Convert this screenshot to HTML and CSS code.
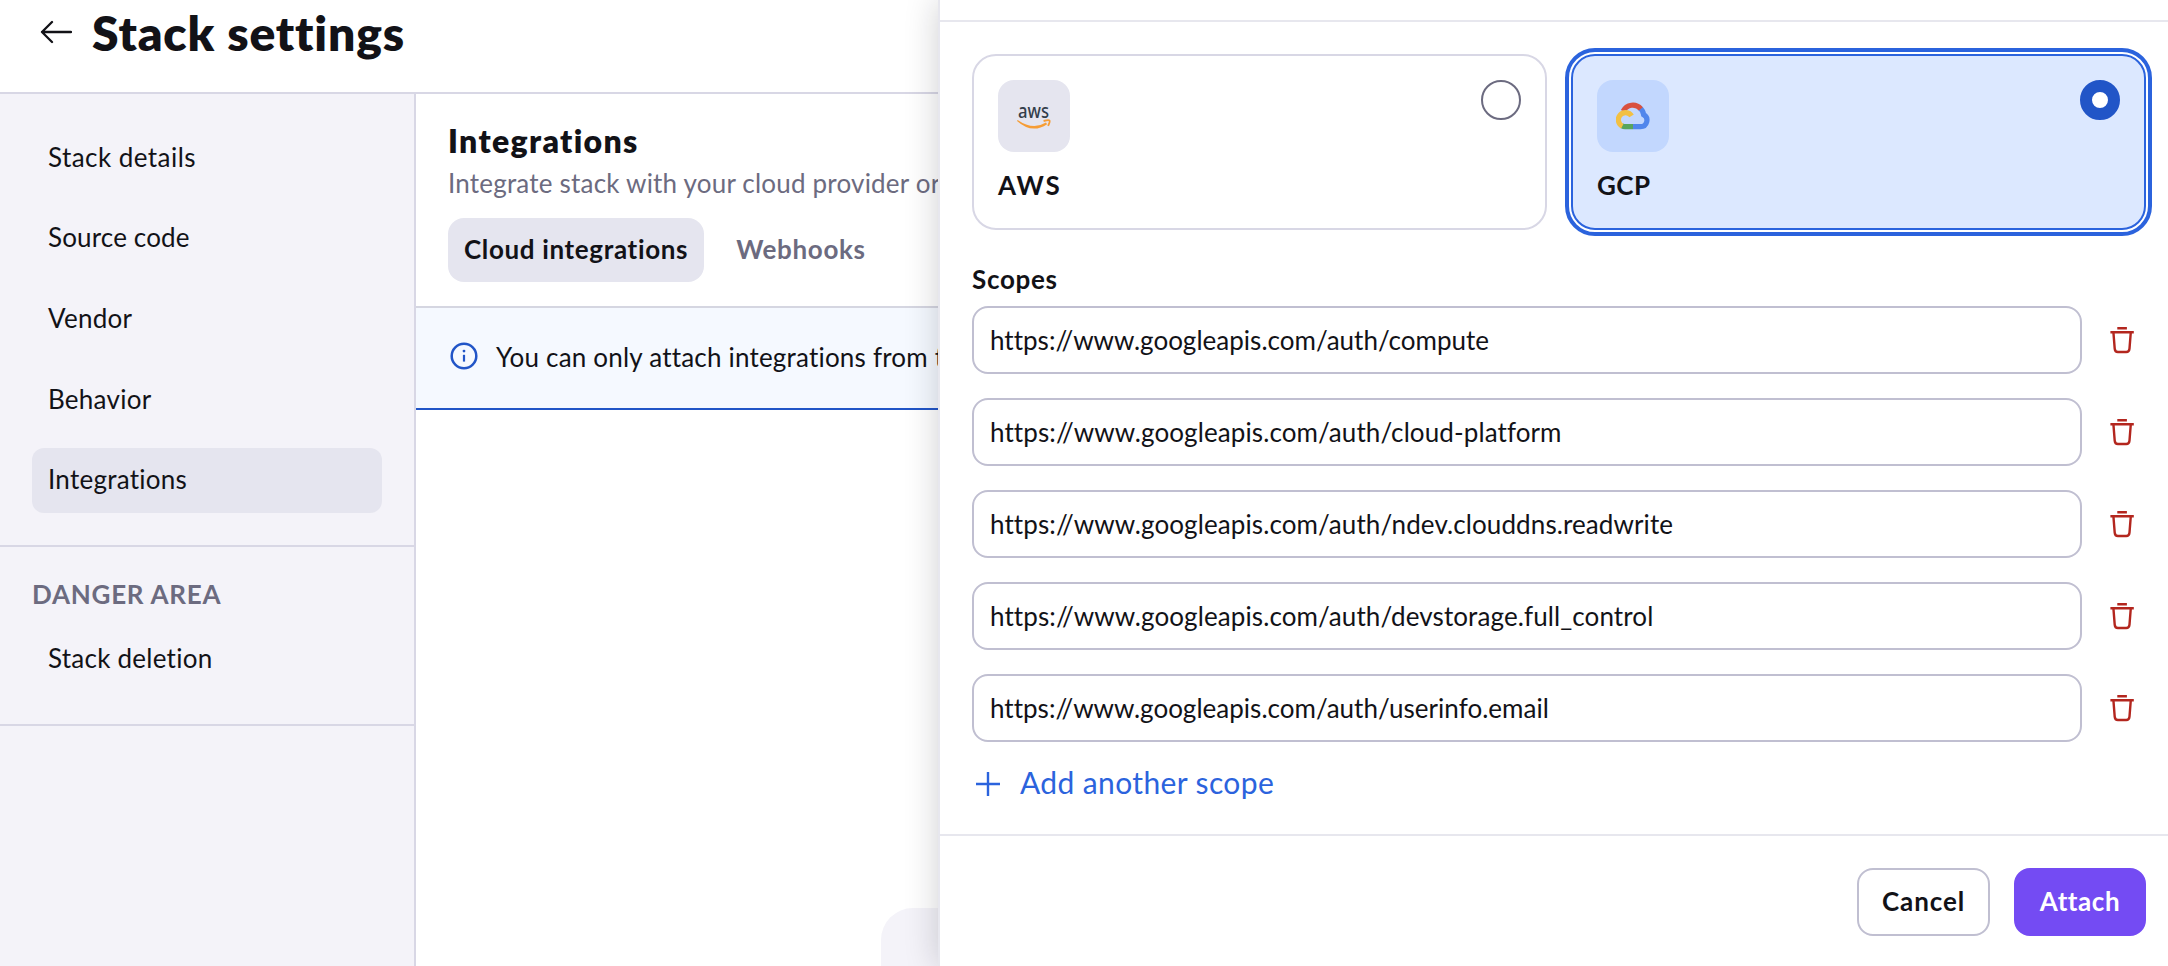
FILE: index.html
```
<!DOCTYPE html>
<html lang="en">
<head>
<meta charset="utf-8">
<title>Stack settings</title>
<link rel="stylesheet" href="styles.css">
</head>
<body>
<svg class="sprite" aria-hidden="true">
  <symbol id="trash" viewBox="0 0 24 28">
    <path d="M7.3 2.2h9.6M.4 6.2h23.4M3.4 6.2l1.3 16.4q.3 3.4 3.2 3.4h8.4q2.9 0 3.2-3.4l1.3-16.4" fill="none" stroke="#b3261e" stroke-width="2.4"/>
  </symbol>
</svg>

<div class="page">
  <header class="page-header">
    <svg class="back" viewBox="0 0 32 24"><path d="M31 12H2M12 2L2 12l10 10" fill="none" stroke="#121217" stroke-width="2.300" stroke-linecap="round" stroke-linejoin="round"/></svg>
    <h1 class="page-title">Stack settings</h1>
  </header>
  <div class="page-body">
    <nav class="sidebar">
      <div class="nav-group">
        <a class="nav-item nav-wide">Stack details</a>
        <a class="nav-item nav-source">Source code</a>
        <a class="nav-item">Vendor</a>
        <a class="nav-item">Behavior</a>
        <a class="nav-item nav-active">Integrations</a>
      </div>
      <div class="nav-group nav-danger">
        <div class="nav-label">DANGER AREA</div>
        <a class="nav-item">Stack deletion</a>
      </div>
    </nav>
    <main class="content">
      <section class="content-header">
        <h2 class="content-title">Integrations</h2>
        <p class="content-sub">Integrate stack with your cloud provider or</p>
        <div class="tabs">
          <a class="tab tab-active">Cloud integrations</a>
          <a class="tab">Webhooks</a>
        </div>
      </section>
      <div class="banner">
        <svg class="info" viewBox="0 0 32 32"><circle cx="16" cy="16" r="12.3" fill="none" stroke="#2155c7" stroke-width="2.5"/><path d="M16 14.8v6.8" stroke="#2155c7" stroke-width="2.2"/><circle cx="16" cy="11.1" r="1.4" fill="#2155c7"/></svg>
        <span>You can only attach integrations from the</span>
      </div>
      <div class="empty"></div>
    </main>
  </div>
</div>

<aside class="drawer">
  <div class="drawer-top"></div>
  <div class="drawer-body">
    <div class="providers">
      <div class="provider">
        <div class="provider-row">
          <div class="tile">
            <svg class="aws" viewBox="0 0 36 24">
              <text x="17.500" y="12" text-anchor="middle" textLength="31" lengthAdjust="spacingAndGlyphs" class="aws-text">aws</text>
              <path d="M1.600 14Q17 24.600 30 16.600l1.100 1.600Q16 28.400 1 15Z" fill="#f69d35"/>
              <path d="M27.600 15q5.200-1.300 5.900-.4t-1.400 5.300" fill="none" stroke="#f69d35" stroke-width="1.900"/>
            </svg>
          </div>
          <span class="radio"></span>
        </div>
        <div class="provider-name name-aws">AWS</div>
      </div>
      <div class="provider provider-selected">
        <div class="provider-row">
          <div class="tile tile-selected">
            <svg class="gcp" viewBox="0 0 34 28" fill="none" stroke-width="5.200">
              <path d="M17 24.600H9Q7.400 24.600 5.800 23.700" stroke="#58a55c"/>
              <path d="M17 24.600h7.500a6.400 6.400 0 0 0 3.100-12Q27.100 8.500 23.600 5.800" stroke="#5086ec"/>
              <path d="M7.200 9.200A10.600 10.600 0 0 1 24.800 6.900" stroke="#d9503f"/>
              <path d="M6.300 24.200A7.200 7.200 0 1 1 15.600 13.900" stroke="#f2c043"/>
            </svg>
          </div>
          <span class="radio radio-on"></span>
        </div>
        <div class="provider-name">GCP</div>
      </div>
    </div>
    <div class="scopes-label">Scopes</div>
    <div class="scopes">
      <div class="scope"><div class="field field-tight">https://www.googleapis.com/auth/compute</div><svg class="trash"><use href="#trash"/></svg></div>
      <div class="scope"><div class="field">https://www.googleapis.com/auth/cloud-platform</div><svg class="trash"><use href="#trash"/></svg></div>
      <div class="scope"><div class="field">https://www.googleapis.com/auth/ndev.clouddns.readwrite</div><svg class="trash"><use href="#trash"/></svg></div>
      <div class="scope"><div class="field">https://www.googleapis.com/auth/devstorage.full_control</div><svg class="trash"><use href="#trash"/></svg></div>
      <div class="scope"><div class="field field-tight">https://www.googleapis.com/auth/userinfo.email</div><svg class="trash"><use href="#trash"/></svg></div>
    </div>
    <a class="add">
      <svg class="plus" viewBox="0 0 24 24"><path d="M12 0v24M0 12h24" stroke="#2b63dd" stroke-width="2.400"/></svg>
      <span>Add another scope</span>
    </a>
  </div>
  <footer class="drawer-footer">
    <button class="btn btn-cancel">Cancel</button>
    <button class="btn btn-attach">Attach</button>
  </footer>
</aside>
</body>
</html>
```
FILE: styles.css
```
* { box-sizing: border-box; }

body {
  margin: 0;
  width: 2168px;
  height: 966px;
  overflow: hidden;
  position: relative;
  background: #fff;
  color: #121217;
  font-family: Lato, "Open Sans", sans-serif;
  font-size: 26px;
  line-height: 32px;
  letter-spacing: 0.2px;
}

h1, h2, p { margin: 0; }
.sprite { display: none; }

.page {
  display: flex;
  flex-direction: column;
  height: 966px;
}

.page-header {
  display: flex;
  align-items: center;
  gap: 20px;
  height: 94px;
  flex: none;
  padding: 0 0 28px 40px;
  border-bottom: 2px solid #d8d7e5;
}

.back { width: 32px; height: 24px; }

.page-title {
  padding-top: 2px;
  font-size: 48px;
  line-height: 58px;
  font-weight: 800;
  letter-spacing: 0.85px;
}

.page-body { display: flex; flex: 1; }

.sidebar {
  width: 416px;
  flex: none;
  background: #f4f3f9;
  border-right: 2px solid #d8d7e5;
}

.nav-group {
  display: flex;
  flex-direction: column;
  gap: 16px;
  padding: 32px;
  border-bottom: 2px solid #d8d7e5;
}

.nav-item {
  display: flex;
  align-items: center;
  height: 64.6px;
  padding: 0 16px 3px;
  border-radius: 12px;
  letter-spacing: 0.25px;
}

.nav-wide { letter-spacing: 0.45px; }
.nav-source { letter-spacing: 0.15px; }
.nav-active { background: #e5e5ef; }
.nav-danger { gap: 17px; padding-top: 31px; }

.nav-label {
  color: #6c6b80;
  font-weight: 700;
  letter-spacing: 0.75px;
}

.content {
  flex: 1;
  display: flex;
  flex-direction: column;
}

.content-header {
  padding: 25px 32px 24px;
  border-bottom: 2px solid #d5d6e1;
}

.content-title {
  font-size: 32px;
  line-height: 44px;
  font-weight: 800;
  letter-spacing: 1.35px;
}

.content-sub {
  margin-top: 2px;
  line-height: 36px;
  color: #6c6b80;
}

.tabs { display: flex; gap: 16px; margin-top: 17px; }

.tab {
  display: flex;
  align-items: center;
  height: 64px;
  padding: 0 16px 3px;
  border-radius: 16px;
  color: #6c6b80;
  font-weight: 700;
  letter-spacing: 0.65px;
}

.tab-active { background: #e5e5ef; color: #121217; }

.banner {
  display: flex;
  align-items: center;
  gap: 16px;
  height: 102px;
  padding: 0 32px 4px;
  background: #f5f9ff;
  border-bottom: 2px solid #2155c7;
}

.banner span { padding-top: 2px; }
.info { width: 32px; height: 32px; }

.empty {
  flex: none;
  height: 58px;
  margin: auto 0 0 465px;
  background: #f4f3f9;
  border-top-left-radius: 32px;
}

/* Slide-over panel covering the right part of the page */
.drawer {
  position: absolute;
  top: 0;
  right: 0;
  display: flex;
  flex-direction: column;
  width: 1230px;
  height: 966px;
  background: #fff;
  border-left: 2px solid #e7e7ee;
  box-shadow: 0 0 32px rgba(18, 20, 30, 0.2);
}

.drawer-top { height: 22px; flex: none; border-bottom: 2px solid #e7e7ee; }

.drawer-body {
  height: 812px;
  padding: 32px 22px 0 32px;
}

.providers { display: grid; grid-template-columns: 575px 575px; gap: 24px; }

.provider {
  height: 176px;
  padding: 24px;
  border: 2px solid #d8d7e5;
  border-radius: 24px;
}

.provider-selected {
  background: #dce8ff;
  border-color: #2b63dd;
  outline: 4px solid #2b63dd;
  outline-offset: 2px;
}

.provider-row { display: flex; justify-content: space-between; }

.tile {
  display: flex;
  align-items: center;
  justify-content: center;
  width: 72px;
  height: 72px;
  border-radius: 16px;
  background: #e5e5ef;
}

.tile-selected { background: #c2d7fe; }
.aws { width: 36px; height: 24px; margin-top: 4px; overflow: visible; }
.aws-text { font-family: "Noto Sans", sans-serif; font-size: 19px; font-weight: 500; letter-spacing: 0; fill: #333e4a; }
.gcp { width: 34px; height: 28px; }

.radio {
  width: 40px;
  height: 40px;
  border: 2px solid #6c6b80;
  border-radius: 50%;
}

.radio-on { border: 12px solid #2155c7; background: #fff; }

.provider-name { margin-top: 17px; font-weight: 700; letter-spacing: 0.45px; }
.name-aws { letter-spacing: 1.8px; }

.scopes-label {
  margin-top: 33px;
  line-height: 32px;
  font-weight: 700;
  letter-spacing: 0.7px;
}

.scopes { display: flex; flex-direction: column; gap: 24px; margin-top: 11px; }
.scope { display: flex; align-items: center; gap: 28px; }

.field {
  display: flex;
  align-items: center;
  width: 1110px;
  height: 68px;
  padding: 0 16px;
  border: 2px solid #c0bfd1;
  border-radius: 16px;
  letter-spacing: 0.1px;
}

.field-tight { letter-spacing: 0.02px; }
.trash { width: 24px; height: 28px; }

.add {
  display: flex;
  align-items: center;
  gap: 20px;
  margin: 22px 0 0 4px;
  color: #2b63dd;
  font-size: 30px;
  line-height: 36px;
  letter-spacing: 0.38px;
}

.plus { width: 24px; height: 24px; margin-top: 3px; }

.drawer-footer {
  display: flex;
  flex: 1;
  align-items: flex-start;
  justify-content: flex-end;
  gap: 24px;
  padding: 32px 22px 0;
  border-top: 2px solid #e7e7ee;
}

.btn {
  width: 133px;
  height: 68px;
  padding: 0 0 3px;
  border: 2px solid #c0bfd1;
  border-radius: 16px;
  background: #fff;
  color: #121217;
  font: 700 26px/32px Lato, "Open Sans", sans-serif;
  letter-spacing: 0.9px;
}

.btn-attach { width: 132px; border-color: #744bf3; background: #744bf3; color: #fff; letter-spacing: 0.55px; }
```
